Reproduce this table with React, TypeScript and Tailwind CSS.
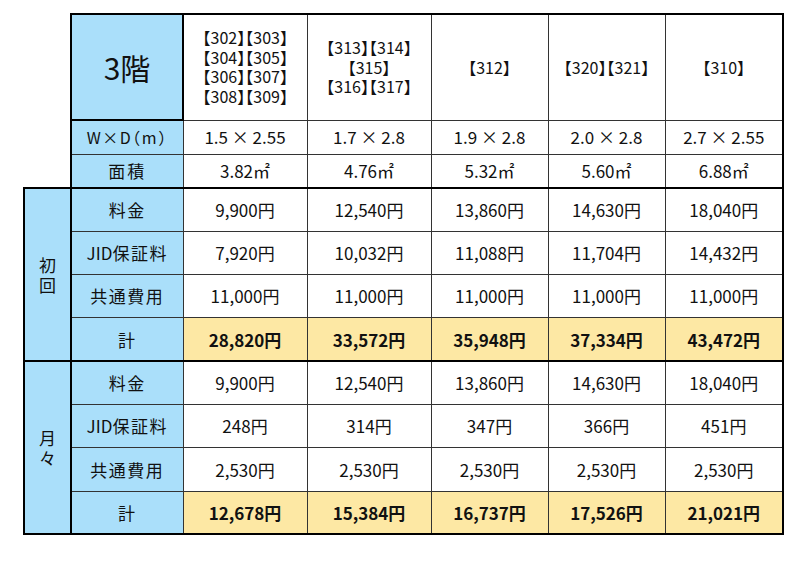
const units = [
  ['【302】【303】', '【304】【305】', '【306】【307】', '【308】【309】'],
  ['【313】【314】', '【315】', '【316】【317】'],
  ['【312】'],
  ['【320】【321】'],
  ['【310】'],
]

const sizes = ['1.5 × 2.55', '1.7 × 2.8', '1.9 × 2.8', '2.0 × 2.8', '2.7 × 2.55']
const areas = ['3.82㎡', '4.76㎡', '5.32㎡', '5.60㎡', '6.88㎡']

const sections = [
  {
    name: ['初', '回'],
    rows: [
      { label: '料金', values: ['9,900円', '12,540円', '13,860円', '14,630円', '18,040円'] },
      { label: 'JID保証料', values: ['7,920円', '10,032円', '11,088円', '11,704円', '14,432円'] },
      { label: '共通費用', values: ['11,000円', '11,000円', '11,000円', '11,000円', '11,000円'] },
      { label: '計', values: ['28,820円', '33,572円', '35,948円', '37,334円', '43,472円'], total: true },
    ],
  },
  {
    name: ['月', '々'],
    rows: [
      { label: '料金', values: ['9,900円', '12,540円', '13,860円', '14,630円', '18,040円'] },
      { label: 'JID保証料', values: ['248円', '314円', '347円', '366円', '451円'] },
      { label: '共通費用', values: ['2,530円', '2,530円', '2,530円', '2,530円', '2,530円'] },
      { label: '計', values: ['12,678円', '15,384円', '16,737円', '17,526円', '21,021円'], total: true },
    ],
  },
]

const widths = ['w-[124px]', 'w-[124px]', 'w-[117px]', 'w-[117px]', 'w-[118px]']

function Label({ text }: { text: string }) {
  if (text.startsWith('JID')) {
    return (
      <>
        <span className="tracking-normal">JID</span>
        {text.slice(3)}
      </>
    )
  }
  return <>{text}</>
}

export default function App() {
  return (
    <div className="w-[800px] h-[565px] bg-white pt-[13px] pl-[23px] font-['Noto_Sans_CJK_JP',sans-serif] text-[#111]">
      <table className="border-collapse table-fixed w-[760px]">
        <colgroup>
          <col className="w-[47px]" />
          <col className="w-[112px]" />
          {widths.map((w, i) => (
            <col key={i} className={w} />
          ))}
        </colgroup>
        <tbody>
          {/* Header */}
          <tr className="h-[106px]">
            <td className="border-0" />
            <td className="bg-[#aadffa] border-2 border-black text-center text-[30px] leading-none">3階</td>
            {units.map((lines, i) => (
              <td
                key={i}
                className={`border border-[#333] border-t-2 border-t-black text-center text-[16px] leading-[19.5px] [font-feature-settings:'halt'] ${i === 4 ? 'border-r-2 border-r-black' : ''}`}
              >
                {lines.map((l, j) => (
                  <div key={j} className="whitespace-nowrap">{l}</div>
                ))}
              </td>
            ))}
          </tr>
          <tr className="h-[34px]">
            <td className="border-0" />
            <td className="bg-[#aadffa] border border-[#333] border-l-2 border-l-black text-center text-[16px] tracking-[1.5px] [font-feature-settings:'halt']">W×D（m）</td>
            {sizes.map((s, i) => (
              <td key={i} className={`border border-[#333] text-center text-[17px] ${i === 4 ? 'border-r-2 border-r-black' : ''}`}>
                {s}
              </td>
            ))}
          </tr>
          <tr className="h-[34px]">
            <td className="border-0" />
            <td className="bg-[#aadffa] border border-[#333] border-l-2 border-l-black text-center text-[17px] tracking-[2px]">面積</td>
            {areas.map((s, i) => (
              <td key={i} className={`border border-[#333] text-center text-[17px] ${i === 4 ? 'border-r-2 border-r-black' : ''}`}>
                {s}
              </td>
            ))}
          </tr>

          {sections.map((sec, si) =>
            sec.rows.map((row, ri) => {
              const top = ri === 0 ? 'border-t-2 border-t-black' : ''
              const bottom = si === 1 && ri === 3 ? 'border-b-2 border-b-black' : ''
              return (
                <tr key={`${si}-${ri}`} className="h-[43.3px]">
                  {ri === 0 && (
                    <td
                      rowSpan={4}
                      className="bg-[#aadffa] border-2 border-black text-center text-[17px] leading-[20px]"
                    >
                      <div>{sec.name[0]}</div>
                      <div>{sec.name[1]}</div>
                    </td>
                  )}
                  <td className={`bg-[#aadffa] border border-[#333] border-l-2 border-l-black text-center text-[17px] tracking-[1.5px] ${top} ${bottom}`}>
                    <Label text={row.label} />
                  </td>
                  {row.values.map((v, i) => (
                    <td
                      key={i}
                      className={`border border-[#333] text-center text-[17px] ${row.total ? 'bg-[#fde8a4] font-bold' : ''} ${top} ${bottom} ${i === 4 ? 'border-r-2 border-r-black' : ''}`}
                    >
                      {v}
                    </td>
                  ))}
                </tr>
              )
            })
          )}
        </tbody>
      </table>
    </div>
  )
}
